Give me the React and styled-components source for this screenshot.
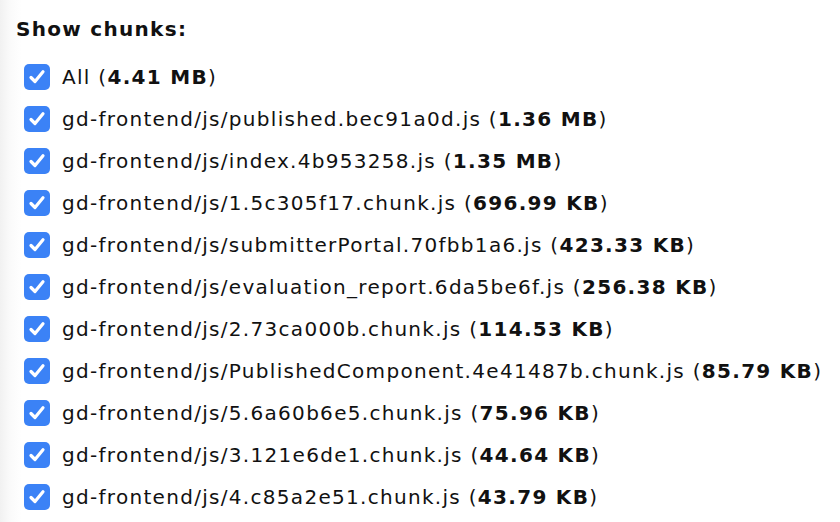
import React from "react";
import styled, { createGlobalStyle } from "styled-components";

const GlobalStyle = createGlobalStyle`
  html, body {
    margin: 0;
    padding: 0;
    background: #ffffff;
  }
`;

const chunks = [
  { label: "All", size: "4.41 MB" },
  { label: "gd-frontend/js/published.bec91a0d.js", size: "1.36 MB" },
  { label: "gd-frontend/js/index.4b953258.js", size: "1.35 MB" },
  { label: "gd-frontend/js/1.5c305f17.chunk.js", size: "696.99 KB" },
  { label: "gd-frontend/js/submitterPortal.70fbb1a6.js", size: "423.33 KB" },
  { label: "gd-frontend/js/evaluation_report.6da5be6f.js", size: "256.38 KB" },
  { label: "gd-frontend/js/2.73ca000b.chunk.js", size: "114.53 KB" },
  { label: "gd-frontend/js/PublishedComponent.4e41487b.chunk.js", size: "85.79 KB" },
  { label: "gd-frontend/js/5.6a60b6e5.chunk.js", size: "75.96 KB" },
  { label: "gd-frontend/js/3.121e6de1.chunk.js", size: "44.64 KB" },
  { label: "gd-frontend/js/4.c85a2e51.chunk.js", size: "43.79 KB" },
];

const Panel = styled.div`
  width: 840px;
  height: 522px;
  box-sizing: border-box;
  padding: 17px 0 0 16px;
  background: linear-gradient(to right, #f1f1f1 0px, #fafafa 10px, #ffffff 22px);
  font-family: "DejaVu Sans", Verdana, sans-serif;
  color: #111;
  overflow: hidden;
`;

const Title = styled.div`
  font-size: 20px;
  font-weight: bold;
  letter-spacing: 1.3px;
  line-height: 24px;
  margin-bottom: 23px;
`;

const List = styled.div`
  display: flex;
  flex-direction: column;
  gap: 16px;
  padding-left: 8px;
`;

const Row = styled.label`
  display: flex;
  align-items: center;
  gap: 12px;
  height: 26px;
  font-size: 20px;
  letter-spacing: 1.3px;
  white-space: nowrap;
`;

const Box = styled.span`
  width: 26px;
  height: 26px;
  border-radius: 5px;
  background: #3b82f6;
  display: flex;
  align-items: center;
  justify-content: center;
  flex-shrink: 0;
`;

const Size = styled.b`
  font-weight: bold;
`;

const Check = () => (
  <Box>
    <svg width="20" height="20" viewBox="0 0 20 20">
      <path d="M4 10.5 L8 14.5 L16 4.8" fill="none" stroke="#fff" strokeWidth="3.2" strokeLinecap="round" strokeLinejoin="round" />
    </svg>
  </Box>
);

export default function App() {
  return (
    <>
      <GlobalStyle />
      <Panel>
        <Title>Show chunks:</Title>
        <List>
          {chunks.map((c) => (
            <Row key={c.label}>
              <Check />
              <span>
                {c.label} (<Size>{c.size}</Size>)
              </span>
            </Row>
          ))}
        </List>
      </Panel>
    </>
  );
}
